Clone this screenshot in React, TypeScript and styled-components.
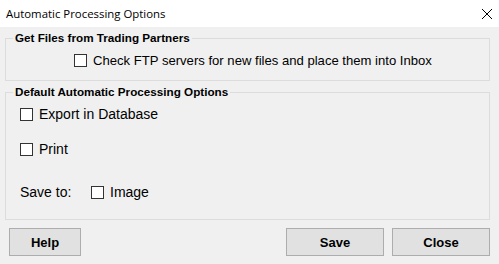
import React from 'react';
import styled, { createGlobalStyle } from 'styled-components';

const GlobalStyle = createGlobalStyle`
  html, body {
    margin: 0;
    padding: 0;
    background: #f0f0f0;
  }
`;

const Window = styled.div`
  width: 499px;
  height: 264px;
  display: flex;
  flex-direction: column;
  background: #f0f0f0;
  font-family: "Liberation Sans", Arial, sans-serif;
  font-size: 13px;
  color: #000;
  overflow: hidden;
`;

const TitleBar = styled.div`
  height: 27px;
  flex: none;
  background: #fff;
  display: flex;
  align-items: center;
  justify-content: space-between;
  padding: 0 6px 0 6px;
  font-family: "Open Sans", "Noto Sans", sans-serif;
  font-size: 11.4px;
`;

const CloseGlyph = styled.svg`
  width: 12px;
  height: 12px;
`;

const Body = styled.div`
  flex: 1;
  display: flex;
  flex-direction: column;
  padding: 4px 9px 0 5px;
`;

const GroupBox = styled.fieldset<{ $height: number; $gap?: number }>`
  margin: ${p => p.$gap ?? 0}px 0 0 0;
  padding: 0;
  border: 1px solid #dcdcdc;
  height: ${p => p.$height}px;
  box-sizing: border-box;
  min-width: 0;
`;

const Legend = styled.legend`
  margin-left: 7px;
  padding: 0 2px;
  font-weight: bold;
  font-size: 11.7px;
  line-height: 14px;
`;

const Row = styled.div<{ $indent: number; $top: number; $size?: number }>`
  display: flex;
  align-items: center;
  padding-left: ${p => p.$indent}px;
  margin-top: ${p => p.$top}px;
  height: 16px;
  font-size: ${p => p.$size ?? 13}px;
`;

const Box = styled.span`
  width: 13px;
  height: 13px;
  box-sizing: border-box;
  border: 1px solid #333;
  background: #fff;
  flex: none;
  margin-right: 6px;
`;

const Label = styled.span`
  white-space: nowrap;
`;

const SaveLabel = styled.span`
  width: 71px;
  flex: none;
`;

const ButtonRow = styled.div`
  display: flex;
  align-items: center;
  margin-top: 8px;
  padding-left: 4px;
`;

const Button = styled.button<{ $width: number }>`
  width: ${p => p.$width}px;
  height: 28px;
  box-sizing: border-box;
  background: #e1e1e1;
  border: 1px solid #adadad;
  font-family: "Liberation Sans", Arial, sans-serif;
  font-weight: bold;
  font-size: 13px;
  color: #000;
  padding: 0;
  margin-right: 8px;
  &:last-child { margin-right: 0; }
`;

const Spacer = styled.div`
  flex: 1;
`;

const Check = ({ children }: { children: React.ReactNode }) => (
  <>
    <Box />
    <Label>{children}</Label>
  </>
);

export default function App() {
  return (
    <Window>
      <GlobalStyle />
      <TitleBar>
        <span>Automatic Processing Options</span>
        <CloseGlyph viewBox="0 0 12 12">
          <path d="M1 1 L11 11 M11 1 L1 11" stroke="#000" strokeWidth="1" fill="none" />
        </CloseGlyph>
      </TitleBar>
      <Body>
        <GroupBox $height={50}>
          <Legend>Get Files from Trading Partners</Legend>
          <Row $indent={68} $top={7} $size={13.1}>
            <Check>Check FTP servers for new files and place them into Inbox</Check>
          </Row>
        </GroupBox>
        <GroupBox $height={135} $gap={4}>
          <Legend>Default Automatic Processing Options</Legend>
          <Row $indent={14} $top={7} $size={14}>
            <Check>Export in Database</Check>
          </Row>
          <Row $indent={14} $top={19} $size={14}>
            <Check>Print</Check>
          </Row>
          <Row $indent={14} $top={27} $size={14}>
            <SaveLabel>Save to:</SaveLabel>
            <Check>Image</Check>
          </Row>
        </GroupBox>
        <ButtonRow>
          <Button $width={72}>Help</Button>
          <Spacer />
          <Button $width={98}>Save</Button>
          <Button $width={98}>Close</Button>
        </ButtonRow>
      </Body>
    </Window>
  );
}
